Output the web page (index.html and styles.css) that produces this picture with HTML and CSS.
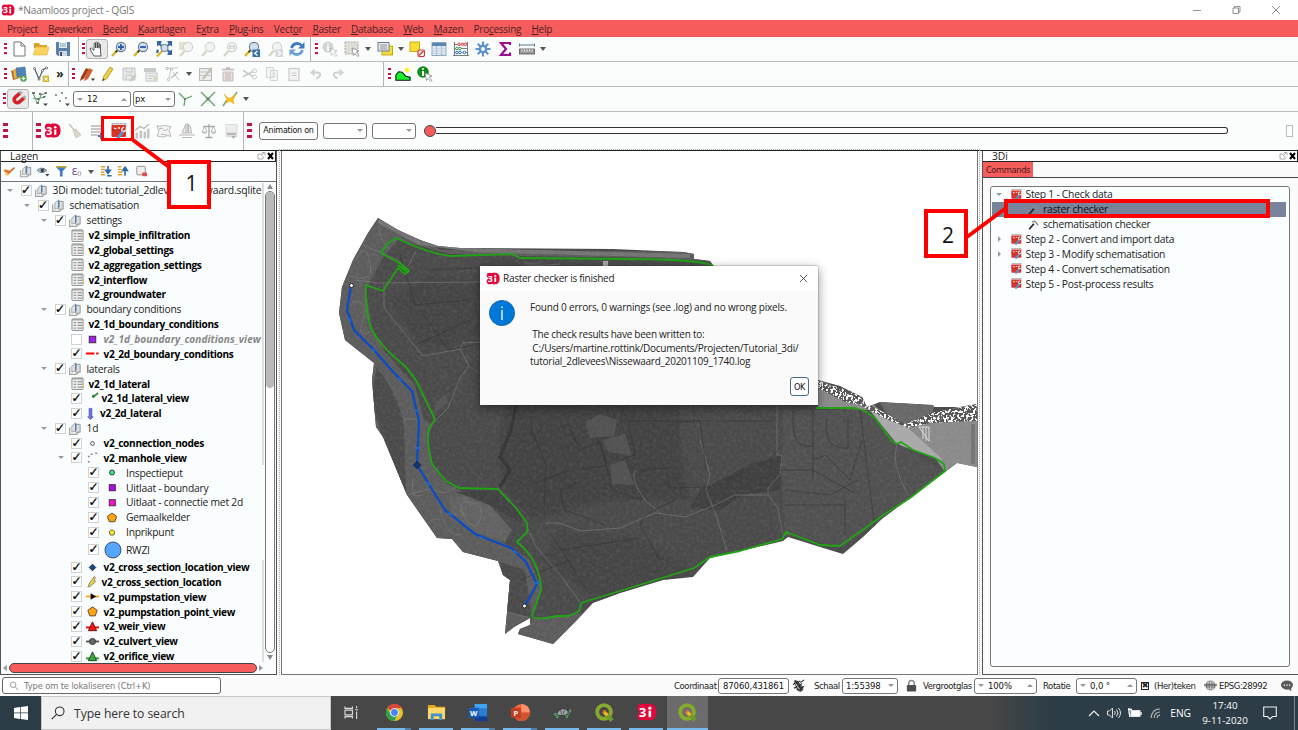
FILE: index.html
```html
<!DOCTYPE html>
<html lang="nl">
<head>
<meta charset="utf-8">
<title>*Naamloos project - QGIS</title>
<link rel="stylesheet" href="styles.css">
</head>
<body>
<svg class="defs" width="0" height="0">
<defs>
<symbol id="logo" viewBox="0 0 16 14"><rect x="3" y="0.5" width="12.5" height="13" rx="5" fill="#e3083c"/><circle cx="4" cy="3.7" r="3.2" fill="#e3083c"/><circle cx="4" cy="10.3" r="3.2" fill="#e3083c"/><text x="2.1" y="11" class="lg">3</text><rect x="9.6" y="6" width="2" height="5" fill="#fff"/><circle cx="10.6" cy="4" r="1.2" fill="#fff"/></symbol>
<symbol id="new" viewBox="0 0 16 16"><path d="M3 1h7l4 4v10H3z" fill="#fff" stroke="#777"/><path d="M10 1v4h4" fill="none" stroke="#777"/></symbol>
<symbol id="open" viewBox="0 0 16 16"><path d="M1 2h5l1 2h7v3H1z" fill="#d9a32b"/><path d="M0.5 14L2.5 6H16l-2 8z" fill="#fbd25d" stroke="#e3b13a" stroke-width=".6"/></symbol>
<symbol id="save" viewBox="0 0 16 16"><path d="M1 1h14v14H3l-2-2z" fill="#5b7fa6"/><rect x="4" y="1" width="8" height="6" fill="#e6eef5"/><path d="M5 3h6M5 5h6" stroke="#8aa"/><rect x="4" y="10" width="8" height="5" fill="#cfd8e2"/><rect x="5" y="11" width="2" height="4" fill="#456"/></symbol>
<symbol id="hand" viewBox="0 0 16 16"><path d="M5 15L2 10 1 7.500l1.500-.4L5 9.500V2.500q.8-1 1.600 0V7 1.600q.8-1 1.700 0V7 2q.9-1 1.700 0v5.300V3.600q.8-.8 1.500 0V11L12 15z" fill="#fff" stroke="#333" stroke-width=".8"/></symbol>
<symbol id="glass" viewBox="0 0 16 16"><path d="M1 15l5-5.400" stroke="#d9b52c" stroke-width="2.400"/><path d="M4.600 11.200L7 8.800" stroke="#222" stroke-width="1.600"/><circle cx="10" cy="6" r="4.600" fill="#cfe0f0" stroke="#667788" stroke-width="1.100"/></symbol>
<symbol id="zin" viewBox="0 0 16 16"><use href="#glass"/><path d="M7 6h6M10 3v6" stroke="#2b5ca4" stroke-width="1.800"/></symbol>
<symbol id="zout" viewBox="0 0 16 16"><use href="#glass"/><path d="M7 6h6" stroke="#2b5ca4" stroke-width="1.800"/></symbol>
<symbol id="zfull" viewBox="0 0 16 16"><path d="M1 15.500l5-5.500" stroke="#d9b52c" stroke-width="2.200"/><circle cx="8.500" cy="7" r="3.600" fill="#cfe0f0" stroke="#667788"/><path d="M1 0h4.500v1.500L4.500 2.500 6 4 4.500 5.500 3 4 1 5.500zM16 0v5.500L14 4l-1.500 1.500L11 4l1.500-1.500-1-1V0zM16 14h-4.500v-1.500l1-1L11 10l1.500-1.500L14 10l2-1.500zM1 8l2 1.500L2 12H0z" fill="#34669e"/></symbol>
<symbol id="gglass" viewBox="0 0 16 16"><path d="M2 15l4.500-5" stroke="#d4d4c4" stroke-width="2.200"/><circle cx="10" cy="6" r="4.600" fill="#f2f3f2" stroke="#ced2d2" stroke-width="1.100"/></symbol>
<symbol id="gz1" viewBox="0 0 16 16"><rect x="1" y="1" width="9" height="8" fill="#e2e2cf"/><use href="#gglass"/></symbol>
<symbol id="gz3" viewBox="0 0 16 16"><use href="#gglass"/><path d="M8 4v4M12 4v4M10 4.500v.8M10 7v.8" stroke="#b9bcbc"/></symbol>
<symbol id="zlast" viewBox="0 0 16 16"><use href="#glass"/><rect x="8.500" y="8.500" width="7.500" height="7.500" fill="#386fa8"/><path d="M13.500 10l-2.800 2.300 2.800 2.300" fill="none" stroke="#fff" stroke-width="1.300"/></symbol>
<symbol id="znext" viewBox="0 0 16 16"><use href="#gglass"/><rect x="8.500" y="8.500" width="7.500" height="7.500" fill="#d3d8dc"/><path d="M11 10l2.800 2.300-2.800 2.300" fill="none" stroke="#fff" stroke-width="1.300"/></symbol>
<symbol id="refresh" viewBox="0 0 16 16"><path d="M2.500 7Q4 2.500 8.500 2.500q2.500 0 4 2" fill="none" stroke="#3f7cc0" stroke-width="2.800"/><path d="M15.500 1v6.500H9z" fill="#3f7cc0"/><path d="M13.500 9Q12 13.500 7.500 13.500q-2.500 0-4-2" fill="none" stroke="#6da0d6" stroke-width="2.800"/><path d="M.5 15V8.500H7z" fill="#6da0d6"/></symbol>
<symbol id="cur" viewBox="0 0 16 16"><path d="M8 7l7 3-2.800 1L15 14.500 13.700 15.500 11 12.500 9.500 14.500z" fill="#fff" stroke="#888" stroke-width=".8"/></symbol>
<symbol id="gident" viewBox="0 0 16 16"><circle cx="6" cy="6" r="5.500" fill="#d2d4d4"/><path d="M6 5v5M6 2.500v1.400" stroke="#fff" stroke-width="1.800"/><use href="#cur" opacity=".5"/></symbol>
<symbol id="gsel" viewBox="0 0 16 16"><rect x="1" y="1" width="13" height="12" fill="#deded4" stroke="#aaa" stroke-dasharray="2 1"/><use href="#cur"/></symbol>
<symbol id="form" viewBox="0 0 16 16"><rect x="5" y="5" width="10.500" height="9" fill="#f3dc3e" stroke="#c7a912"/><rect x="1" y="1.500" width="11" height="8.500" fill="#e8ecef" stroke="#707a84"/><path d="M3 4h7M3 6h7M3 8h7" stroke="#8a939b"/></symbol>
<symbol id="desel" viewBox="0 0 16 16"><rect x="1" y="1" width="9.500" height="9.500" fill="#f7de34" stroke="#d0a912"/><rect x="9" y="9" width="6.500" height="6.500" rx="1.500" fill="#fff" stroke="#d93636" stroke-width="1.200"/><path d="M10 14.500l4.500-4.500" stroke="#d93636" stroke-width="1.400"/></symbol>
<symbol id="table" viewBox="0 0 16 16"><rect x="1" y="1.500" width="14" height="13" fill="#dfe8f0" stroke="#8aa6c2"/><path d="M1 3.500h14" stroke="#5c87b5" stroke-width="3"/><path d="M5.500 5v9M10.500 5v9" stroke="#98afc6" stroke-width=".8"/><path d="M1 7.500h14M1 10h14M1 12.500h14" stroke="#bccada" stroke-width=".6"/></symbol>
<symbol id="abacus" viewBox="0 0 16 16"><path d="M1.500 1v14M14.500 1v14M0 14.500h16M1 3.500h14M1 7.500h14M1 11.500h14" stroke="#66717c" stroke-width=".9"/><g fill="#fff" stroke-width="1"><g stroke="#d33"><circle cx="6" cy="3.300" r="1.300"/><circle cx="9.500" cy="3.300" r="1.300"/><circle cx="12.500" cy="3.300" r="1.300"/></g><g stroke="#3a9c46"><circle cx="4" cy="7.500" r="1.300"/><circle cx="7" cy="7.500" r="1.300"/></g><g stroke="#2f6fb5"><circle cx="4" cy="11.500" r="1.300"/><circle cx="7" cy="11.500" r="1.300"/><circle cx="11.500" cy="11.500" r="1.300"/></g></g></symbol>
<symbol id="gear" viewBox="0 0 16 16"><path d="M8 .5v15M.5 8h15M2.700 2.700l10.600 10.600M13.300 2.700L2.700 13.300" stroke="#5b92cf" stroke-width="2"/><circle cx="8" cy="8" r="4.400" fill="#5b92cf"/><circle cx="8" cy="8" r="1.900" fill="#fff"/></symbol>
<symbol id="sigma" viewBox="0 0 16 16"><path d="M13 4V2H4l5 6-5 6h9v-2.500" fill="none" stroke="#990b94" stroke-width="2.200"/></symbol>
<symbol id="ruler" viewBox="0 0 16 16"><path d="M.5 4h15" stroke="#5e7b96"/><path d="M.5 2.500v3M15.500 2.500v3" stroke="#5e7b96"/><rect x=".5" y="8" width="15" height="5" fill="#9a9a9a" stroke="#555" stroke-width=".8"/><path d="M3 8v2.500M5.500 8v2.500M8 8v3M10.500 8v2.500M13 8v2.500" stroke="#fff" stroke-width=".8"/></symbol>
<symbol id="layers" viewBox="0 0 16 16"><path d="M0 5l6-2 3 9-7 2z" fill="#b06c26"/><path d="M2 3.500l7-1 1 9-7 1z" fill="#e8b137"/><path d="M5 2l9-1 1 9-9 1z" fill="#4d82bd" stroke="#345f90" stroke-width=".5"/><circle cx="12.500" cy="12.500" r="3.300" fill="#57a555"/><path d="M10.700 12.500h3.600M12.500 10.700v3.600" stroke="#fff" stroke-width="1.200"/></symbol>
<symbol id="vnew" viewBox="0 0 16 16"><path d="M1.500 2.500L6 13l3.500-8.500 3-2.500" fill="none" stroke="#4d5d6c" stroke-width="1.200"/><g fill="#fff" stroke="#556" stroke-width=".8"><circle cx="1.500" cy="2.500" r="1.100"/><circle cx="6" cy="13" r="1.100"/><circle cx="9.500" cy="4.500" r="1.100"/><circle cx="13.500" cy="2" r="1.100"/></g><rect x="10" y="10" width="6" height="6" fill="#e4c02f" stroke="#a98a13" stroke-width=".5"/><path d="M11.500 11.500l3 3m0-3l-3 3" stroke="#fff"/></symbol>
<symbol id="pens" viewBox="0 0 16 16"><path d="M1 15l1-4 5-9 3 1.500-5 9z" fill="#9c3f1a"/><path d="M5 15l1-4 4-9 4 2-5 9z" fill="#d1622f"/><path d="M12 12.500h4L14 15z" fill="#333"/></symbol>
<symbol id="pen" viewBox="0 0 16 16"><path d="M2.500 15l1-4.500L10 1l3 2-6 9.500z" fill="#f0cf45" stroke="#a08a23" stroke-width=".7"/><path d="M2.500 15l.7-2.500 1.500 1z" fill="#333"/></symbol>
<symbol id="gsave" viewBox="0 0 16 16"><path d="M2 2h12v12H2z" fill="#e9ebeb" stroke="#c2c5c5"/><path d="M5 2v4h6V2M5 14V9h6v5" fill="none" stroke="#c2c5c5"/><path d="M9 15l6-6" stroke="#cacaba" stroke-width="2"/></symbol>
<symbol id="gtab" viewBox="0 0 16 16"><rect x="1" y="2" width="12" height="4" fill="#c8caca"/><rect x="3" y="7" width="11" height="8" fill="#efefef" stroke="#c2c5c5"/><path d="M5 10h7M5 12.500h4" stroke="#c2c5c5"/><circle cx="12.500" cy="12.500" r="2.500" fill="#d9d8c8"/></symbol>
<symbol id="gvert" viewBox="0 0 16 16"><path d="M1 2.500h6l6-1M6 3L3.500 14M8 6l6 8" fill="none" stroke="#c8cbcb" stroke-width="1.100"/><path d="M6 12l7-6" stroke="#b9bcbc" stroke-width="1.600"/><g fill="#fff" stroke="#bbb"><circle cx="2" cy="2.500" r="1.200"/><circle cx="6.500" cy="3" r="1.200"/><circle cx="3.500" cy="13.500" r="1.200"/></g></symbol>
<symbol id="gedit" viewBox="0 0 16 16"><rect x="1.500" y="2.500" width="12" height="12" fill="#ececec" stroke="#b8bbbb"/><path d="M2 6h11M2 9.500h11" stroke="#c2c5c5"/><path d="M5 13l8.500-11" stroke="#c2c3b0" stroke-width="2.200"/></symbol>
<symbol id="gtrash" viewBox="0 0 16 16"><path d="M2 3.500h12M6 2h4" stroke="#c4b6b6" stroke-width="1.500"/><path d="M3 6h10v9H3z" fill="#e9e2e2" stroke="#c4b8b8"/><path d="M6 7v7M8 7v7M10 7v7" stroke="#c4b8b8"/></symbol>
<symbol id="gcut" viewBox="0 0 16 16"><path d="M1 4.500l10 6M1 10.500l10-5" stroke="#c9cbcb" stroke-width="1.500"/><circle cx="12.500" cy="5" r="2" fill="none" stroke="#c9cbcb"/><circle cx="12.500" cy="11" r="2" fill="none" stroke="#c9cbcb"/></symbol>
<symbol id="gcopy" viewBox="0 0 16 16"><path d="M2.500 1.500h7v10h-7zM6.500 4.500h7v10h-7z" fill="#f4f4f4" stroke="#d2d4d4"/><path d="M8 8h4M8 10.500h4" stroke="#d9dbdb"/></symbol>
<symbol id="gpaste" viewBox="0 0 16 16"><rect x="3" y="2.500" width="10" height="12" fill="#f3f3f3" stroke="#ced0d0" stroke-width="1.300"/><path d="M6 2.500h4M5.500 7h5M5.500 9.500h5" stroke="#c6c8c8" stroke-width="1.200"/></symbol>
<symbol id="gundo" viewBox="0 0 16 16"><path d="M4 6h6q3.500 0 3.500 3T8.500 14" fill="none" stroke="#cfd1d1" stroke-width="2.600"/><path d="M0 6l6-5v10z" fill="#cfd1d1"/></symbol>
<symbol id="green" viewBox="0 0 18 16"><path d="M1 14V9l3-3.500 4 .5 4 4.500 5 1V15H1z" fill="#19f52c" stroke="#111" stroke-width="1.200"/><circle cx="13.500" cy="3.500" r="2" fill="#ffee1a"/><path d="M13.500 0v7M10 3.500h7M11 1l5 5M16 1l-5 5" stroke="#ffee1a" stroke-width=".8"/></symbol>
<symbol id="ident" viewBox="0 0 16 16"><circle cx="6" cy="6" r="5.800" fill="#118a1b"/><path d="M6 5v5M6 2.200v1.600" stroke="#fff" stroke-width="2"/><use href="#cur"/></symbol>
<symbol id="magnet" viewBox="0 0 16 16"><g transform="rotate(50 8 8)"><path d="M4.800 3v5.800a3.200 3.200 0 0 0 6.400 0V3" fill="none" stroke="#d3232a" stroke-width="3.600"/><path d="M3 1.800h3.600M9.400 1.800h3.600" stroke="#aaa" stroke-width="2.400"/></g></symbol>
<symbol id="vsnap" viewBox="0 0 16 16"><path d="M1 2l4.500 11L9 4l5-2M1 7l5 1 8-3" fill="none" stroke="#56a55d"/><path d="M0 2h3M7 3h2.500M12.500 2h2.500M5 8h2M11 6h2M4.500 12h2.500" stroke="#777" stroke-width="2.200"/><path d="M11 12.500h5L13.500 15z" fill="#444"/></symbol>
<symbol id="dots" viewBox="0 0 16 16"><path d="M1 4h2M7 2h2M5 10h2M11 7h2" stroke="#999" stroke-width="2"/><path d="M11 12.500h5L13.500 15z" fill="#444"/></symbol>
<symbol id="topo" viewBox="0 0 16 16"><path d="M6 15L7 8 1 2M7 8l7-3" fill="none" stroke="#5fa868" stroke-width="1.300"/><path d="M6 8h2" stroke="#777" stroke-width="2"/></symbol>
<symbol id="inter" viewBox="0 0 16 16"><path d="M1 1l14 14M15 1L1 15" stroke="#6bae72" stroke-width="1.500"/><path d="M6 8h4M8 6v4" stroke="#777"/></symbol>
<symbol id="trace" viewBox="0 0 16 16"><path d="M1 15L5 9M10 8l5-7" stroke="#6bae72" stroke-width="1.500"/><path d="M2 3l4 4h3l5-4-3 6 1 4-4-3-4 2 1-4z" fill="#f4c11d" stroke="#e0a916" stroke-width=".6"/></symbol>
<symbol id="broom" viewBox="0 0 16 16"><path d="M2 1l5 6" stroke="#c4c4bc" stroke-width="1.500"/><path d="M6 7l3-1 5 6-5 3z" fill="#d9d6c8" stroke="#bdbab0" stroke-width=".6"/></symbol>
<symbol id="gadd" viewBox="0 0 16 16"><path d="M2 3h11M2 6h11M2 9h11M2 12h7" stroke="#c6c6c6" stroke-width="1.800"/><path d="M9 13h6M12 10v6" stroke="#3583c4" stroke-width="2"/></symbol>
<symbol id="tool" viewBox="0 0 16 16"><path d="M1 2V.8h14V2" fill="none" stroke="#999"/><rect x=".5" y="2" width="14.500" height="12" rx="1" fill="#d8342b"/><path d="M.5 7h14" stroke="#b3241e" stroke-width=".8"/><path d="M3 5l2.500 1M7 5h2" stroke="#fff" stroke-width="1.300"/><path d="M6.500 15.500l5.500-7" stroke="#4a9ad8" stroke-width="2.800"/><path d="M11 8.500V5.500l2-1.500M12 8.800l3-1.300.5-2.500" fill="none" stroke="#e4e8ea" stroke-width="1.500"/></symbol>
<symbol id="chart" viewBox="0 0 16 16"><path d="M2 15v-5h1.500v5zM6 15V8h1.500v7zM10 15V9h1.500v6zM13.500 15V6H15v9z" fill="#c4c4c4" stroke="#c4c4c4"/><path d="M1 7.500l5-4 4 2 5-4.500" fill="none" stroke="#b5b5b5" stroke-width="1.200"/></symbol>
<symbol id="gmap" viewBox="0 0 16 16"><path d="M1 2.500l3 1 3-1 8 1-2 4 2 6-3-1-5 1.500-6-1 2-4z" fill="#f4f4f4" stroke="#bbb"/><path d="M3 6l3-1 2 3 4-2M5 11l6 1" fill="none" stroke="#bbb"/></symbol>
<symbol id="ship" viewBox="0 0 16 16"><path d="M7 1L3 10h4zM9.500 1l2 3 1 6h-3z" fill="#eee" stroke="#b8b8b8"/><path d="M8.200 0v11" stroke="#b8b8b8"/><path d="M0 12h16M3 14.500h10" fill="none" stroke="#b8b8b8" stroke-width="1.200"/></symbol>
<symbol id="scale" viewBox="0 0 16 16"><path d="M8 1v13M4.500 14.500h7M2 3.500h12" stroke="#aaa" stroke-width="1.300"/><path d="M3.500 3.500L1 9h5zM12.500 3.500L10 9h5z" fill="none" stroke="#aaa" stroke-width=".8"/><path d="M1 9.500q2.500 2.500 5 0zM10 9.500q2.500 2.500 5 0z" fill="#aaa"/></symbol>
<symbol id="gdoc" viewBox="0 0 16 16"><path d="M3 1.500h11v12H3z" fill="#ececec" stroke="#dadada"/><path d="M4 11h9" stroke="#b6b6b6" stroke-width="2.500"/><path d="M8.500 13h4l-2 3z" fill="#aaa"/></symbol>
<symbol id="grp" viewBox="0 0 14 14"><path d="M.7 6v7.300H8l2-2" fill="none" stroke="#a2a2a2" stroke-width="1.300"/><path d="M3 4.500l4-3.500v8.500L3 11z" fill="#e2e2e2" stroke="#8f8f8f" stroke-width=".8"/><path d="M7 2.500h5V11H7z" fill="#dedede" stroke="#858585" stroke-width=".9"/><path d="M7.300 1.500v7.500" stroke="#4b7fb5" stroke-width="1.600"/></symbol>
<symbol id="tbl" viewBox="0 0 14 14"><rect x="1" y="1" width="12" height="12.500" rx="1" fill="#ededed" stroke="#8b8b8b"/><path d="M1 2h12" stroke="#8b8b8b"/><path d="M3 5h2.500M7 5h5M3 8h2.500M7 8h5M3 11h2.500M7 11h5" stroke="#999" stroke-width="1.400"/></symbol>
<symbol id="brush" viewBox="0 0 14 14"><path d="M1 5l5 6 3-3-3-3z" fill="#f2a93a"/><path d="M1.500 6l5 2.500L13 3" fill="none" stroke="#d4682c" stroke-width="2"/><path d="M2 9.500l4 2" stroke="#f2c14a" stroke-width="1.800"/></symbol>
<symbol id="eye" viewBox="0 0 14 14"><path d="M0 6q5-5 11 0-5 5-11 0z" fill="#c4cbd2" stroke="#5b6b7b"/><circle cx="6" cy="6" r="2" fill="#345"/><path d="M9 10h5l-2.500 3z" fill="#444"/></symbol>
<symbol id="funnel" viewBox="0 0 14 14"><path d="M1 2h12L8.500 7v6h-3V7z" fill="#3e7dbf"/><path d="M1 2h12" stroke="#d5a72b" stroke-width="1.600"/></symbol>
<symbol id="expand" viewBox="0 0 14 14"><path d="M1 2h5M1 5h4M1 8h4M1 11h5" stroke="#dfa338" stroke-width="1.700"/><path d="M9 1v6M6.500 6L9 9.500 11.500 6z" stroke="#2c67a8" stroke-width="1.800" fill="#2c67a8"/><path d="M8 12h5" stroke="#2c67a8" stroke-width="1.600"/></symbol>
<symbol id="collapse" viewBox="0 0 14 14"><path d="M1 2h4M1 5h4M1 8h5M1 11h5" stroke="#dfa338" stroke-width="1.700"/><path d="M9 12V6M6.500 6L9 2.500 11.500 6z" stroke="#2c67a8" stroke-width="1.800" fill="#2c67a8"/></symbol>
<symbol id="remove" viewBox="0 0 14 14"><rect x="2" y="1.500" width="9.500" height="9.500" rx="1" fill="#eee" stroke="#888"/><rect x="8" y="8.500" width="5.500" height="4" rx="1" fill="#e34c4c"/></symbol>
<symbol id="hammer" viewBox="0 0 14 14"><path d="M1.500 13l6-7" stroke="#222" stroke-width="2.200"/><path d="M5 3.500L8.500 3l4.500 5" fill="none" stroke="#8d8d8d" stroke-width="1.800"/></symbol>
<symbol id="qgis" viewBox="0 0 20 20"><circle cx="9.500" cy="9.500" r="7.200" fill="none" stroke="#86ab2c" stroke-width="4"/><path d="M11 11l7 7.500" stroke="#6d9a28" stroke-width="4.500"/><path d="M9 9l4 4" stroke="#f0b12b" stroke-width="3.500"/><path d="M8 7.500l4 .5-3 3z" fill="#ed6c26"/></symbol>
</defs>
</svg>

<header class="title"><svg class="i16"><use href="#logo"/></svg><span class="t-name">*Naamloos project - QGIS</span>
<svg class="wctl" viewBox="0 0 100 20"><path d="M7 10.500h8M47 8h5.500v5.500H47zM48.500 8V6.500H54V12h-1.500M86 6l8 8M94 6l-8 8" fill="none" stroke="#777" stroke-width=".8"/></svg></header>
<nav class="menu"><span>Pro<u>j</u>ect</span><span><u>B</u>ewerken</span><span><u>B</u>eeld</span><span><u>K</u>aartlagen</span><span>E<u>x</u>tra</span><span><u>P</u>lug-ins</span><span>Vect<u>o</u>r</span><span><u>R</u>aster</span><span><u>D</u>atabase</span><span><u>W</u>eb</span><span><u>M</u>azen</span><span>Pro<u>c</u>essing</span><span><u>H</u>elp</span></nav>

<div class="bar">
<div class="grp w79"><i class="h h8"></i><b><svg><use href="#new"/></svg></b><b><svg><use href="#open"/></svg></b><b><svg><use href="#save"/></svg></b></div>
<div class="grp w232"><i class="h h7"></i><b class="on"><svg><use href="#hand"/></svg></b><b><svg><use href="#zin"/></svg></b><b><svg><use href="#zout"/></svg></b><b><svg><use href="#zfull"/></svg></b><b><svg><use href="#gz1"/></svg></b><b><svg><use href="#gglass"/></svg></b><b><svg><use href="#gz3"/></svg></b><b><svg><use href="#zlast"/></svg></b><b><svg><use href="#znext"/></svg></b><b><svg><use href="#refresh"/></svg></b></div>
<div class="grp"><i class="h h8"></i><b><svg><use href="#gident"/></svg></b><b><svg><use href="#gsel"/></svg></b><i class="dd"></i><b><svg><use href="#form"/></svg></b><i class="dd"></i><b><svg><use href="#desel"/></svg></b><b><svg><use href="#table"/></svg></b><b><svg><use href="#abacus"/></svg></b><b><svg><use href="#gear"/></svg></b><b><svg><use href="#sigma"/></svg></b><b><svg><use href="#ruler"/></svg></b><i class="dd"></i></div>
</div>
<div class="bar">
<div class="grp w69"><i class="h h8"></i><b><svg><use href="#layers"/></svg></b><b><svg><use href="#vnew"/></svg></b><span class="more">»</span></div>
<div class="grp w315"><i class="h h7"></i><b><svg><use href="#pens"/></svg></b><b class="c20"><svg><use href="#pen"/></svg></b><b><svg><use href="#gsave"/></svg></b><b><svg><use href="#gtab"/></svg></b><b><svg><use href="#gvert"/></svg></b><i class="dd"></i><b><svg><use href="#gedit"/></svg></b><b><svg><use href="#gtrash"/></svg></b><b><svg><use href="#gcut"/></svg></b><b><svg><use href="#gcopy"/></svg></b><b><svg><use href="#gpaste"/></svg></b><b><svg class="sm"><use href="#gundo"/></svg></b><b><svg class="sm flip"><use href="#gundo"/></svg></b></div>
<div class="grp"><i class="h h8"></i><b><svg><use href="#green"/></svg></b><b><svg><use href="#ident"/></svg></b></div>
</div>
<div class="bar">
<div class="grp"><i class="h h7"></i><b class="on"><svg><use href="#magnet"/></svg></b><b><svg><use href="#vsnap"/></svg></b><b><svg><use href="#dots"/></svg></b><div class="field f58"><i class="dn"></i><span>12</span><i class="up"></i></div><div class="field f41"><span>px</span><i class="dn"></i></div><b><svg><use href="#topo"/></svg></b><b><svg><use href="#inter"/></svg></b><b><svg><use href="#trace"/></svg></b><i class="dd"></i></div>
</div>
<div class="bar tall">
<div class="grp w33"><i class="h h8 big"></i></div>
<div class="grp w211"><i class="h h8 big"></i><b><svg class="lgo"><use href="#logo"/></svg></b><b><svg><use href="#broom"/></svg></b><b><svg><use href="#gadd"/></svg></b><b><svg><use href="#tool"/></svg></b><b><svg><use href="#chart"/></svg></b><b><svg><use href="#gmap"/></svg></b><b><svg><use href="#ship"/></svg></b><b><svg><use href="#scale"/></svg></b><b><svg><use href="#gdoc"/></svg></b></div>
<div class="grp fill"><i class="h h8 big"></i><button class="anim">Animation on</button><div class="field f44"><i class="dn"></i></div><div class="field f44"><i class="dn"></i></div><div class="slider"><i class="knob"></i><i class="track"></i></div><i class="stub"></i></div>
</div>

<main class="work">
<section class="dock left">
<div class="dtitle"><span>Lagen</span><svg viewBox="0 0 18 10"><path d="M1 3h4M1 3v5h5V5M4 5l3-3M5 1.500h3v3" fill="none" stroke="#999" stroke-width=".8"/><path d="M11 2l5 6M16 2l-5 6" stroke="#000" stroke-width="2"/></svg></div>
<div class="ltools"><svg><use href="#brush"/></svg><svg><use href="#grp"/></svg><svg><use href="#eye"/></svg><svg><use href="#funnel"/></svg><span>ε<small>()</small></span><i class="dd"></i><svg><use href="#expand"/></svg><svg><use href="#collapse"/></svg><svg><use href="#remove"/></svg></div>
<div class="lbody">
<div class="tree">
<div class="r l0"><i class="ar"></i><i class="cb">✓</i><svg><use href="#grp"/></svg><span class="root"><span>3Di model: tutorial_2dleve</span><span>waard.sqlite</span></span></div>
<div class="r l1"><i class="ar"></i><i class="cb">✓</i><svg><use href="#grp"/></svg><span>schematisation</span></div>
<div class="r l2"><i class="ar"></i><i class="cb">✓</i><svg><use href="#grp"/></svg><span>settings</span></div>
<div class="r lt"><svg><use href="#tbl"/></svg><strong>v2_simple_infiltration</strong></div>
<div class="r lt"><svg><use href="#tbl"/></svg><strong>v2_global_settings</strong></div>
<div class="r lt"><svg><use href="#tbl"/></svg><strong>v2_aggregation_settings</strong></div>
<div class="r lt"><svg><use href="#tbl"/></svg><strong>v2_interflow</strong></div>
<div class="r lt"><svg><use href="#tbl"/></svg><strong>v2_groundwater</strong></div>
<div class="r l2"><i class="ar"></i><i class="cb">✓</i><svg><use href="#grp"/></svg><span>boundary conditions</span></div>
<div class="r lt"><svg><use href="#tbl"/></svg><strong>v2_1d_boundary_conditions</strong></div>
<div class="r l3"><i class="ar n"></i><i class="cb"></i><svg viewBox="0 0 14 14"><rect x="3.500" y="3.500" width="7" height="7" fill="#a01ff0" stroke="#423"/></svg><em>v2_1d_boundary_conditions_view</em></div>
<div class="r l3"><i class="ar n"></i><i class="cb">✓</i><svg viewBox="0 0 14 14"><path d="M0 7h9M11 7h2.500" stroke="#f00" stroke-width="2"/></svg><strong>v2_2d_boundary_conditions</strong></div>
<div class="r l2"><i class="ar"></i><i class="cb">✓</i><svg><use href="#grp"/></svg><span>laterals</span></div>
<div class="r lt"><svg><use href="#tbl"/></svg><strong>v2_1d_lateral</strong></div>
<div class="r l3 m1"><i class="ar n"></i><i class="cb">✓</i><svg viewBox="0 0 14 14"><path d="M7 6l6-5" stroke="#3b9140" stroke-width="2"/><circle cx="8" cy="4.500" r="1.500" fill="#2e7c33"/></svg><strong>v2_1d_lateral_view</strong></div>
<div class="r l3 m3"><i class="ar n"></i><i class="cb">✓</i><svg viewBox="0 0 14 14"><path d="M5.500 1.500h3v9H10L7 13.500 4 10.500h1.500z" fill="#6d70e8" stroke="#4a4cae" stroke-width=".7"/></svg><strong>v2_2d_lateral</strong></div>
<div class="r l2"><i class="ar"></i><i class="cb">✓</i><svg><use href="#grp"/></svg><span>1d</span></div>
<div class="r l3"><i class="ar n"></i><i class="cb">✓</i><svg viewBox="0 0 14 14"><circle cx="7" cy="7" r="2" fill="#fff" stroke="#444"/></svg><strong>v2_connection_nodes</strong></div>
<div class="r l3"><i class="ar"></i><i class="cb">✓</i><svg viewBox="0 0 14 14"><path d="M2 6h2M5 3.500h2M10 2.500h2M2 11.500h2" stroke="#888" stroke-width="1.600"/></svg><strong>v2_manhole_view</strong></div>
<div class="r l4"><i class="cb">✓</i><svg viewBox="0 0 14 14"><circle cx="6.500" cy="7" r="2.700" fill="#3de57c" stroke="#234"/></svg><span>Inspectieput</span></div>
<div class="r l4"><i class="cb">✓</i><svg viewBox="0 0 14 14"><rect x="3.500" y="4" width="6.500" height="6.500" fill="#a80df5" stroke="#423"/></svg><span>Uitlaat - boundary</span></div>
<div class="r l4"><i class="cb">✓</i><svg viewBox="0 0 14 14"><rect x="3.500" y="4" width="6.500" height="6.500" fill="#f90fd2" stroke="#423"/></svg><span>Uitlaat - connectie met 2d</span></div>
<div class="r l4"><i class="cb">✓</i><svg viewBox="0 0 14 14"><path d="M6.500 2.200l5 3.600-2 5.700h-6l-2-5.700z" fill="#ffa50f" stroke="#543"/></svg><span>Gemaalkelder</span></div>
<div class="r l4"><i class="cb">✓</i><svg viewBox="0 0 14 14"><path d="M6.500 4l3 2.200-1.200 3.500H4.700L3.500 6.200z" fill="#fff52a" stroke="#553"/></svg><span>Inprikpunt</span></div>
<div class="r l4 hi"><i class="cb">✓</i><svg viewBox="0 0 18 18"><circle cx="9" cy="9" r="8" fill="#55a6fc" stroke="#345" stroke-width=".9"/></svg><span>RWZI</span></div>
<div class="r l3"><i class="ar n"></i><i class="cb">✓</i><svg viewBox="0 0 14 14"><path d="M7 3.500L10.500 7 7 10.500 3.500 7z" fill="#1a4798" stroke="#123"/></svg><strong>v2_cross_section_location_view</strong></div>
<div class="r l3 m1"><i class="ar n"></i><i class="cb">✓</i><svg viewBox="0 0 14 14"><path d="M2 13l2-5L9 1.500l1 .8-1 4 1.500.5L5 12z" fill="#e4cc50" stroke="#665" stroke-width=".7"/></svg><strong>v2_cross_section_location</strong></div>
<div class="r l3"><i class="ar n"></i><i class="cb">✓</i><svg viewBox="0 0 14 14"><path d="M0 7h14" stroke="#faa41a" stroke-width="2"/><path d="M5 3.500L11 7l-6 3.500z" fill="#111"/></svg><strong>v2_pumpstation_view</strong></div>
<div class="r l3"><i class="ar n"></i><i class="cb">✓</i><svg viewBox="0 0 14 14"><path d="M7 2l5 3.700-2 6H4l-2-6z" fill="#ffa50f" stroke="#543"/></svg><strong>v2_pumpstation_point_view</strong></div>
<div class="r l3"><i class="ar n"></i><i class="cb">✓</i><svg viewBox="0 0 14 14"><path d="M0 8h14" stroke="#e00" stroke-width="2"/><path d="M7 2l4.500 9.500h-9z" fill="#f11616" stroke="#611"/></svg><strong>v2_weir_view</strong></div>
<div class="r l3"><i class="ar n"></i><i class="cb">✓</i><svg viewBox="0 0 14 14"><path d="M0 7h14" stroke="#555" stroke-width="2"/><circle cx="7" cy="7" r="3.300" fill="#666" stroke="#333"/></svg><strong>v2_culvert_view</strong></div>
<div class="r l3"><i class="ar n"></i><i class="cb">✓</i><svg viewBox="0 0 14 14"><path d="M0 9h14" stroke="#393" stroke-width="2"/><path d="M7 2l4.500 9.500h-9z" fill="#3aa83a" stroke="#142"/></svg><strong>v2_orifice_view</strong></div>
</div>
<div class="vs"><i class="tri u"></i><div class="vtrack"><i></i></div><i class="tri"></i></div>
</div>
<div class="hs"><i class="tri l"></i><i class="hbar"></i><i class="tri rr"></i></div>
</section>

<section class="canvas">
<svg class="map" viewBox="282 151 695 522">
<defs>
<clipPath id="land"><path d="M378 218L398 230 420 240 438 246 460 248 613 249 683 252 694 254 694 259 710 261 713 265 818 380 840 386 862 397 867 407 880 402 933 405 934 407 960 407 977 404V467L957 463 945 472 910 498 883 518 863 537 843 554 820 547 788 537 783 541 740 551 710 558 693 577 663 580 620 593 593 603 575 622 553 644 518 634 520 629 530 625V618L514 627 505 634 510 580 503 575 498 561 463 552 452 539 437 538 407 495 383 437 376 427 372 380 374 363 345 340 339 313 342 287 353 260 368 233Z"/></clipPath>
<filter id="grain" x="0" y="0" width="100%" height="100%"><feTurbulence type="fractalNoise" baseFrequency=".3" numOctaves="3" seed="6"/><feColorMatrix values="0 0 0 0 .7  0 0 0 0 .7  0 0 0 0 .7  1.6 0 0 0 -.6"/></filter>
<filter id="specks" x="0" y="0" width="100%" height="100%"><feTurbulence type="fractalNoise" baseFrequency=".45" numOctaves="2" seed="3"/><feColorMatrix values="0 0 0 0 1  0 0 0 0 1  0 0 0 0 1  14 0 0 0 -7" result="n"/><feComposite in="n" in2="SourceGraphic" operator="in"/></filter>
<filter id="soft"><feGaussianBlur stdDeviation="2"/></filter>
</defs>
<g clip-path="url(#land)">
<rect x="330" y="200" width="650" height="450" fill="#4a4a4a"/>
<path d="M335 215L378 215 440 250 720 252V262L650 258 520 256 450 254 398 240 384 256 366 290 372 330 385 352 415 385 424 420 433 425 428 438 432 465 446 483 470 495 500 540 530 560 542 590 532 618 590 612 553 650 490 650 330 400Z" fill="#5c5c5c"/>
<path d="M377 368Q402 400 404 430L406 494 383 437 370 400ZM500 562L525 570 532 618 508 612Z" fill="#4a4a4a"/>
<path d="M378 221L420 243 480 250.500 690 256" fill="none" stroke="#747474" stroke-width="4"/>
<path d="M450 500L465 496 490 505 512 530 505 542 478 533 452 520Z" fill="#626262"/>
<path d="M455 492L496 490 524 518 520 522 492 506 465 495Z" fill="#414141"/>
<g filter="url(#soft)"><path d="M505 405H680V440L690 500 610 500 530 520 505 490 498 460Z" fill="#424242"/>
<path d="M430 275L480 280 480 340 425 350 390 300ZM540 560L600 600 690 570 640 540 560 530Z" fill="#444"/></g>
<path d="M740 470L782 455 780 490 745 494 720 510 690 508 700 490Z" fill="#3f3f3f"/>
<path d="M818 380L865 398 880 410 905 425 977 400V468L957 463 945 472 935 458 897 444 870 410 818 408Z" fill="#8b8b8b"/>
<path d="M868 408L880 413 905 425 943 460 935 458 897 444Z" fill="#a9a9a9"/>
<path d="M880 402L934 405 932 420 905 425 885 412Z" fill="#686868"/>
<path d="M783 410H866L892 440 945 471 910 498 843 548 784 535 782 470Z" fill="#505050"/>
<rect x="330" y="200" width="650" height="450" filter="url(#grain)" opacity=".12"/>
<g fill="none" stroke="#838383" stroke-width=".8" opacity=".7">
<path d="M363 245L382 253 398 260 409 270M355 280L378 283 480 282M384 284V308L410 340 423 356 460 349 463 343 480 342M416 251L408 266M460 349L469 366 460 378 448 408 436 420M388 248L382 240 378 226M356 260Q365 240 370 262T350 276M352 302Q370 300 363 320T370 332M404 419H420M407 495L430 489 445 493 460 485M528 529L535 545 560 575 580 602M545 523L560 523 580 531 620 528 655 513 685 517 715 505 735 495 768 495 768 488 780 475 782 455 777 455 777 405M768 495L778 508 783 535M700 440L710 475 706 490 716 515 727 551M635 470Q630 480 645 500L660 513M897 444Q890 465 909 496M507 612L530 618"/>
<path d="M440 510Q448 540 462 534M465 516Q455 500 470 502T480 520T460 510M413 480Q410 500 422 495M425 530Q430 515 440 520M524 262L535 266 560 264"/></g>
<g fill="none" stroke="#2f2f2f" stroke-width=".7" opacity=".65">
<path d="M620 405L628 420 635 455 622 459 635 470M676 422H694V405M620 421H755L777 421M700 420L706 470M640 470L667 468 669 488 708 487M725 480L740 475 745 466 770 460 780 447M560 428L568 424 580 450 600 442 606 465 580 470M583 480L560 490 565 510 605 525M590 420L604 455 612 490 642 500M530 425L546 465 544 510M660 560L640 525 645 515 675 500M560 550L640 538M530 485L570 470M793 410V425Q795 450 813 446M827 418Q822 450 848 448V416M813 410V480M780 470H813L830 480 855 493M785 490L830 495 858 480M785 505H845M845 500V535M860 410L875 530M814 460L825 455 850 480 862 440"/>
<path d="M400 255L415 305 470 300M425 270L480 268M420 310L448 350 475 345M415 345L470 320M520 580L570 560M552 535L590 595"/></g>
<path d="M516 405L511 430 500 457 510 470 500 487" fill="none" stroke="#383838" stroke-width="3"/>
<g fill="#646464" opacity=".5"><path d="M436 402L446 394 448 402 434 414ZM585 422L600 414 617 420 614 436 590 438ZM604 440L625 434 632 456 608 452ZM610 465L625 460 634 485 612 484ZM524 262H540V266H524Z"/></g>
<path d="M603 261h5v5h-5z" fill="#aaa"/>
<path d="M818 381L860 394 868 404 905 424 935 412 977 404V421L930 423 908 428 884 418 860 405 845 402 818 388Z" fill="#575757"/>
<path d="M818 381L860 394 868 404 905 424 935 412 977 404V421L930 423 908 428 884 418 860 405 845 402 818 388Z" filter="url(#specks)"/>
<path d="M919 427h10v14zM923 427v12M926 427v14" fill="none" stroke="#ddd"/>
<path d="M971 424h4v40h-4z" fill="#777"/>
</g>
<g fill="none" stroke="#20a414" stroke-width="1.800" stroke-linejoin="round">
<path d="M713 266Q700 259 622 259L520 258 512 254 450 256Q430 254 396 238L388 243 381 253 401 264 409 271 405 274 398 268 383 291 366 285Q365 320 375 335T398 360Q415 374 421 391L435 419 429 429Q426 440 432 464L446 481 459 488 498 489 516 508 527 523V532L517 542Q540 560 541 590L532 616Q536 621 557 616L569 616 579 611 581 603 620 591 694 568 710 557 740 551 782 539 786 532 820 545 840 546 885 514 910 498 945 471 944 464 935 458 913 450 901 442 897 444 892 441 875 418 865 411 855 408H816"/><path d="M398 265l9 7-3-4-5-2"/></g>
<path d="M351 285L347 310 354 330 374 350 395 374 412 391 419 421 417 465 445 510 475 534 511 548 526 562 537 584 525 606" fill="none" stroke="#0d4bc4" stroke-width="2.300"/>
<path d="M348 318l3 3M371 349l4 2M397 378l5 2M415 410l4 2M415 448h5M426 482l5 3M448 513l4 2M479 537l4 1M513 551l4 2M534 583h5" stroke="#2067d2" stroke-width="1.800"/>
<path d="M417 461.500l3.500 3.500-3.500 3.500-3.500-3.500z" fill="#14357d" stroke="#0b1c48"/>
<circle cx="351.500" cy="285.500" r="2" fill="#fff" stroke="#222"/><circle cx="524.500" cy="606" r="2" fill="#fff" stroke="#222"/>
</svg>
</section>

<section class="dock right">
<div class="dtitle"><span>3Di</span><svg viewBox="0 0 18 10"><path d="M1 3h4M1 3v5h5V5M4 5l3-3M5 1.500h3v3" fill="none" stroke="#999" stroke-width=".8"/><path d="M11 2l5 6M16 2l-5 6" stroke="#000" stroke-width="2"/></svg></div>
<div class="tabs"><span>Commands</span></div>
<div class="cmds">
<div class="c"><i class="ar"></i><svg><use href="#tool"/></svg><span>Step 1 - Check data</span></div>
<div class="c sub sel"><svg><use href="#hammer"/></svg><span>raster checker</span></div>
<div class="c sub"><svg><use href="#hammer"/></svg><span>schematisation checker</span></div>
<div class="c"><i class="ar side"></i><svg><use href="#tool"/></svg><span>Step 2 - Convert and import data</span></div>
<div class="c"><i class="ar side"></i><svg><use href="#tool"/></svg><span>Step 3 - Modify schematisation</span></div>
<div class="c"><i class="ar n"></i><svg><use href="#tool"/></svg><span>Step 4 - Convert schematisation</span></div>
<div class="c"><i class="ar n"></i><svg><use href="#tool"/></svg><span>Step 5 - Post-process results</span></div>
</div>
</section>
</main>

<footer class="status">
<div class="locate"><svg viewBox="0 0 12 12"><circle cx="5" cy="4.500" r="3.300" fill="none" stroke="#888"/><path d="M7.500 7l3.500 4" stroke="#888"/></svg><span>Type om te lokaliseren (Ctrl+K)</span></div>
<span class="lab">Coordinaat</span><div class="field f71"><span>87060,431861</span></div>
<svg class="s14" viewBox="0 0 14 14"><path d="M2 3q3-3 5 0l5 6q1 4-3 5-2 0-4-3z" fill="#555"/><path d="M1 6l8-4M2 10l9-5M5 12l8-4M9 4l4-3M3 1l7 11" stroke="#222" stroke-width="1.100"/><path d="M4 5l4 6" stroke="#eee"/></svg>
<span class="lab schaal">Schaal</span><div class="field f56"><span>1:55398</span><i class="dn"></i></div>
<svg class="s14 lock" viewBox="0 0 14 14"><path d="M4 7V4.500q0-3 3-3t3 3V7" fill="none" stroke="#888" stroke-width="1.600"/><rect x="2" y="6.500" width="10" height="7" rx="1" fill="#4d4d4d"/></svg>
<span class="lab verg">Vergrootglas</span><div class="field f62"><i class="dn"></i><span>100%</span><i class="up"></i></div>
<span class="lab rot">Rotatie</span><div class="field f60"><i class="dn"></i><span>0,0 °</span><i class="up"></i></div>
<i class="xbox">✖</i><span class="lab her">(Her)teken</span>
<svg class="s14 globe" viewBox="0 0 14 14"><circle cx="7" cy="7" r="5.500" fill="#777"/><path d="M1.500 7h11M7 1.500v11M3 4h8M3 10h8" stroke="#ddd" stroke-width=".7"/><ellipse cx="7" cy="7" rx="2.800" ry="5.500" fill="none" stroke="#ddd" stroke-width=".7"/><path d="M0 6.500h14" stroke="#666" stroke-width="1.600"/></svg>
<span class="lab epsg">EPSG:28992</span>
<svg class="s14 talk" viewBox="0 0 14 14"><ellipse cx="7" cy="6.500" rx="6.500" ry="5" fill="#5b5b5b"/><path d="M8 10l3.500 3.500V9z" fill="#5b5b5b"/><path d="M3.500 6.500h7" stroke="#fff" stroke-width="1.400" stroke-dasharray="1.400 1.400"/></svg>
</footer>

<div class="taskbar">
<div class="start"><svg viewBox="0 0 14 14"><path d="M0 2l6-.9v5.500H0zM6.700 1L14 0v6.600H6.700zM0 7.300h6v5.600L0 12zM6.700 7.300H14V14l-7.300-1z" fill="#fff"/></svg></div>
<div class="search"><svg viewBox="0 0 14 14"><circle cx="8.700" cy="5.300" r="4.300" fill="none" stroke="#333" stroke-width="1.100"/><path d="M5.600 8.400L.8 13.200" stroke="#333" stroke-width="1.200"/></svg><span>Type here to search</span></div>
<div class="apps">
<div class="app none"><svg class="tv" viewBox="0 0 16 14"><path d="M1 .5v2h8v-2M1 4.500h8v5H1zM1 13.500v-2h8v2M13.500 0v2.500M13.500 6v8M12 4h3" fill="none" stroke="#ddd" stroke-width="1.200"/></svg></div>
<div class="app two"><svg viewBox="0 0 20 20"><circle cx="10" cy="10" r="9" fill="#e7c02d"/><path d="M10 10L2.200 5.500A9 9 0 0 1 17.800 5.500H10z" fill="#d9453a"/><path d="M2.200 5.500A9 9 0 0 0 9.500 19L13.500 12 6 12z" fill="#2fa04f"/><circle cx="10" cy="10" r="4.600" fill="#fff"/><circle cx="10" cy="10" r="3.600" fill="#4285f4"/></svg></div>
<div class="app"><svg viewBox="0 0 20 20"><path d="M1 2h7l2 2h9v4H1z" fill="#e0a51b"/><path d="M1 5h18v12H1z" fill="#fbd867"/><path d="M4 18v-7h12v7h-3v-4H7v4z" fill="#3f93d3"/></svg></div>
<div class="app two"><svg viewBox="0 0 20 20"><path d="M6 1h13v18H6z" fill="#2b7cd3"/><path d="M6 1h13v4.500H6z" fill="#41a5ee"/><path d="M6 14h13v5H6z" fill="#103f91"/><rect y="5" width="10.500" height="10.500" rx="1" fill="#185abd"/><text x="1" y="13.200" class="ap">W</text></svg></div>
<div class="app two"><svg viewBox="0 0 20 20"><circle cx="11" cy="10" r="9" fill="#ed6c47"/><path d="M11 1a9 9 0 0 1 9 9h-9z" fill="#ff8f6b"/><path d="M20 10a9 9 0 0 1-18 0z" fill="#d35230"/><rect y="5" width="10.500" height="10.500" rx="1" fill="#c43e1c"/><text x="2.500" y="13.200" class="ap">P</text></svg></div>
<div class="app"><svg viewBox="0 0 20 20"><path d="M2 13q4-1 13 0l4-6M4 11l-3 1M6 13l-2 3M14 13l1 3" stroke="#4c9a5c" stroke-width="2" fill="none"/><path d="M4 12q2-6 7-6t5 5l-3 2H5z" fill="#a3a7ad" stroke="#333"/><path d="M8 7l1 5M12 7l-1 5" stroke="#555"/></svg></div>
<div class="app"><svg><use href="#qgis"/></svg></div>
<div class="app"><svg class="big3"><use href="#logo"/></svg></div>
<div class="app act"><svg><use href="#qgis"/></svg></div>
</div>
<div class="tray">
<svg viewBox="0 0 74 14"><path d="M1 10l5-5 5 5" fill="none" stroke="#eee" stroke-width="1.200"/><path d="M19.500 5h2l3-3v10l-3-3h-2zM26.500 5q1.500 2 0 4M28.500 3.500q3 3.500 0 7M30.500 2q4 5 0 10" fill="none" stroke="#ddd"/><rect x="43" y="4.500" width="9" height="6" fill="#fff" stroke="#ddd"/><path d="M53 6v3M40 3.500h4M41 2v4l1 5" stroke="#fff" stroke-width="1.300" fill="none"/><path d="M63 12q1-9 9-9M66 12q1-6 6-6M69 12q.5-3 3-3" fill="none" stroke="#bbb" stroke-width="1.100"/></svg>
<span>ENG</span><div class="clock"><span>17:40</span><span>9-11-2020</span></div>
<svg class="note" viewBox="0 0 14 14"><path d="M.7 1h12.600v9.500H9.500L7 13l-2.500-2.500H.7z" fill="none" stroke="#eee" stroke-width="1.100"/></svg><i class="edge"></i>
</div>
</div>

<div class="dialog">
<div class="dlgt"><svg class="dl"><use href="#logo"/></svg><span>Raster checker is finished</span><svg class="x" viewBox="0 0 10 10"><path d="M1 1l8 8M9 1L1 9" stroke="#333" stroke-width=".9"/></svg></div>
<div class="dlgb"><svg class="info" viewBox="0 0 26 26"><circle cx="13" cy="13" r="12.600" fill="#0078d7" stroke="#0a5ea5" stroke-width=".8"/><path d="M13 10v10M13 6.500v1.800" stroke="#fff" stroke-width="1.300"/></svg>
<p><span class="q1">Found 0 errors, 0 warnings (see .log) and no wrong pixels.</span><br><br><span class="q2"> The check results have been written to:</span><br><span class="q3"> C:/Users/martine.rottink/Documents/Projecten/Tutorial_3di/</span><br><span class="q4">tutorial_2dlevees\Nissewaard_20201109_1740.log</span></p></div>
<button class="ok">OK</button>
</div>

<svg class="lines" viewBox="0 0 1298 730"><path d="M133 140L169 167M967 237L1006 208" stroke="#f00" stroke-width="4"/></svg>
<div class="mark m-a"></div><div class="mark m-b"></div>
<div class="num n1">1</div><div class="num n2">2</div>
</body>
</html>
```
FILE: styles.css
```css
* { box-sizing: border-box; }
body { margin: 0; width: 1298px; height: 730px; overflow: hidden; position: relative; display: flex; flex-direction: column; background: #fbfbfb; font: 10.3px/15px "Open Sans", "Noto Sans", sans-serif; color: #222; }
.defs { position: absolute; }
svg { display: block; flex: none; }
i, em { font-style: normal; }
.lg { font: bold 10px "Open Sans", sans-serif; fill: #fff; }
.ap { font: bold 8px "Open Sans", sans-serif; fill: #fff; }

.title { height: 20px; flex: none; display: flex; align-items: center; background: #fff; color: #777; padding-left: 1px; }
.i16 { width: 14px; height: 12px; }
.t-name { margin-left: 3px; font-size: 10.200px; letter-spacing: -.25px; }
.wctl { width: 100px; height: 20px; margin-left: auto; margin-right: 12px; }

.menu { height: 17px; flex: none; background: #f75c5c; color: #4c2326; display: flex; gap: 10.200px; padding-left: 7px; line-height: 18px; font-size: 10px; letter-spacing: -.25px; }
.menu u { text-underline-offset: 1px; }

.bar { height: 25px; flex: none; display: flex; border-bottom: 1px solid #bcbcbc; background: #fafdfc; }
.bar.tall { height: 38px; border-bottom: 0; }
.bar.tall .grp { padding-bottom: 1px; }
.grp { display: flex; align-items: center; border-right: 1px solid #b4b4b4; height: 100%; flex: none; }
.grp:last-child { border: 0; }
.w79 { width: 79px; } .w232 { width: 232px; } .w69 { width: 69px; } .w315 { width: 315px; } .w33 { width: 33px; } .w211 { width: 211px; }
.grp.fill { flex: 1; }
.h { height: 12px; flex: none; background: repeating-linear-gradient(#c01346 0 2px, transparent 2px 4.500px) no-repeat 4px 0 / 3px 12px; }
.h8 { width: 8px; } .h7 { width: 7px; background-position: 3px 0; }
.h.big { height: 15px; background: repeating-linear-gradient(#c01346 0 3px, transparent 3px 6px) no-repeat 3px 0 / 5px 15px; }
.grp b { width: 22px; height: 20px; display: flex; align-items: center; justify-content: center; flex: none; }
.w232 b { width: 22.200px; }
.w211 b { width: 22.400px; }
.grp b svg { width: 16px; height: 16px; }
.grp b svg.sm { width: 12px; height: 12px; }
.grp b svg.lgo { width: 17px; height: 15px; }
.flip { transform: scaleX(-1); }
.grp b.c20 { width: 20px; }
.on { background: #e9e9e9; border: 1px solid #b5b5b5; border-radius: 3px; }
.dd { width: 10.500px; display: flex; justify-content: center; flex: none; }
.dd::before { content: ""; border: 3px solid transparent; border-top: 4px solid #555; border-bottom: 0; }
.more { width: 17px; text-align: center; font-size: 12px; font-weight: bold; color: #222; line-height: 20px; }
.field { height: 16px; border: 1px solid #777; border-radius: 3px; background: #fff; display: flex; align-items: center; gap: 4px; padding: 0 3px; font: 8.500px/14px "DejaVu Sans", sans-serif; letter-spacing: -.1px; color: #111; flex: none; }
.field i { border: 3px solid transparent; }
.field .dn { border-top: 3.500px solid #999; border-bottom: 0; }
.field .up { border-bottom: 3.500px solid #999; border-top: 0; }
.field i:last-child { margin-left: auto; }
.f58 { width: 58px; margin-right: 2px; } .f41 { width: 42px; padding-left: 1px; } .f44 { width: 44px; margin-left: 5px; }
.anim { width: 59px; height: 18px; margin: 0 0 0 7px; padding: 0; border: 1px solid #777; border-radius: 3px; background: #fdfdfd; font: 8px "DejaVu Sans", sans-serif; letter-spacing: -.25px; white-space: nowrap; color: #111; }
.slider { display: flex; align-items: center; width: 804px; margin-left: 8px; }
.knob { width: 12px; height: 12px; border: 1px solid #444; border-radius: 50%; background: #f75c5c; }
.track { flex: 1; height: 7px; border: 1px solid #333; border-left: 0; border-radius: 0 3px 3px 0; background: #fff; }
.stub { width: 7px; height: 12px; border: 1px solid #bbb; margin-left: auto; margin-right: 5px; }

.work { height: 525px; flex: none; display: flex; border-top: 1px solid #222; }
.dock { display: flex; flex-direction: column; }
.left { width: 277px; border: 1px solid #555; border-top: 0; background: #fafdfd; }
.dtitle { height: 11px; flex: none; display: flex; align-items: center; border: 1px solid #222; border-top: 0; border-left: 0; padding-left: 9px; background: #fff; line-height: 11px; letter-spacing: -.1px; }
.dtitle svg { width: 18px; height: 10px; margin-left: auto; }
.ltools { height: 20px; flex: none; display: flex; align-items: center; gap: 4.700px; padding-left: 2px; border-bottom: 1px solid #777; }
.ltools svg { width: 12.500px; height: 12.500px; }
.ltools span { width: 12px; color: #744a86; font-size: 12px; line-height: 10px; white-space: nowrap; }
.ltools small { font-size: 6px; }
.ltools .dd { width: 8px; margin-left: -1px; }
.lbody { height: 480px; flex: none; display: flex; }
.tree { width: 263px; flex: none; overflow: hidden; padding-top: 1px; letter-spacing: -.24px; }
.r { height: 14.860px; display: flex; align-items: center; white-space: nowrap; line-height: 14px; width: 263px; overflow: hidden; border-right: 2px solid #dfdfdf; flex: none; }
.r.l4 { border: 0; }
.r.hi { height: 20px; }
.r svg { width: 13px; height: 13px; margin: 0 4.500px 0 3px; }
.root { width: 209px; display: flex; justify-content: space-between; letter-spacing: -.15px; }
.ar { width: 10px; margin-right: 5.500px; display: flex; justify-content: center; flex: none; }
.ar::before { content: ""; border: 3px solid transparent; border-top: 3.500px solid #999; border-bottom: 0; }
.ar.side::before { border: 3px solid transparent; border-left: 3.500px solid #999; border-right: 0; }
.ar.n::before { display: none; }
.cb { width: 11px; height: 11px; margin-right: .5px; border: 1px solid #d2d2d2; background: #fff; font: bold 12px/9px "DejaVu Sans", sans-serif; letter-spacing: 0; color: #000; display: flex; justify-content: center; flex: none; -webkit-text-stroke: .3px #000; }
.l0 { padding-left: 4px; } .l1 { padding-left: 21px; } .l2 { padding-left: 38px; } .l3 { padding-left: 54.500px; } .lt { padding-left: 67px; } .l4 { padding-left: 87px; }
.r.l3 svg { margin-right: 5px; }
.r.l4 svg { margin: 0 7px 0 6.500px; }
.r.hi svg { width: 18px; height: 18px; margin: 0 4.500px 0 4px; }
.r.m1 svg { margin-right: 3px; } .r.m3 svg { margin-left: 1px; margin-right: 3.500px; }
.r strong, .r em { font-size: 10.100px; letter-spacing: -.31px; color: #000; }
.r em { font-weight: bold; font-style: italic; color: #888; letter-spacing: .06px; }
.vs { width: 12px; display: flex; flex-direction: column; align-items: center; }
.vtrack { flex: 1; width: 10px; border: 1px solid #777; border-radius: 5px; background: #fff; }
.vtrack i { display: block; height: 196px; background: #b9b9b9; border-radius: 4px; }
.tri { border: 3px solid transparent; border-top: 5px solid #888; border-bottom: 0; margin: 2px; flex: none; }
.tri.u { border-top: 0; border-bottom: 5px solid #888; }
.tri.l { border: 3px solid transparent; border-right: 4px solid #999; border-left: 0; margin: 0 2px; }
.tri.rr { border: 3px solid transparent; border-left: 4px solid #999; border-right: 0; margin: 0 2px; }
.hs { flex: 1; display: flex; align-items: center; padding-bottom: 1px; }
.hbar { width: 248px; height: 10px; background: #f75c5c; border: 1px solid #444; border-radius: 5px; }

.canvas { width: 697px; margin: 0 4px; border: 1px solid #777; border-top: 0; background: #fff; outline: 1px dotted #aaa; outline-offset: 1px; }
.map { width: 695px; height: 522px; }
.right { flex: 1; border-left: 1px solid #555; border-bottom: 1px solid #555; }
.tabs { height: 16px; flex: none; border-bottom: 1px solid #444; display: flex; }
.tabs span { width: 50px; background: #f75c5c; font: 8.300px/16px "DejaVu Sans", sans-serif; letter-spacing: -.35px; text-align: center; color: #4a1719; }
.cmds { margin: 8px 8px 7px 7px; flex: 1; border: 1px solid #777; border-radius: 3px; background: #fafefe; }
.c { height: 14.860px; display: flex; align-items: center; line-height: 14px; padding-left: 3px; white-space: nowrap; letter-spacing: -.25px; }
.c svg { width: 11px; height: 11px; margin-right: 4px; }
.c .ar { margin-right: 6.500px; }
.c.sub { padding-left: 36px; margin: 0 3px 0 1px; }
.c.sel { background: #77849b; color: #111; }
.c span { font-size: 10.300px; }

.status { height: 21px; flex: none; display: flex; align-items: center; background: #fbfbfb; padding-left: 2px; }
.locate { width: 219px; height: 17px; border: 1px solid #666; border-radius: 3px; background: #fff; display: flex; align-items: center; padding-left: 6px; gap: 5px; color: #777; font: 8.300px "DejaVu Sans", sans-serif; letter-spacing: -.1px; }
.locate svg { width: 10px; height: 10px; }
.lab { font: 8.500px "DejaVu Sans", sans-serif; letter-spacing: -.4px; width: 42px; margin: 0 2px 0 453px; white-space: nowrap; flex: none; }
.f71 { width: 71px; justify-content: center; }
.s14 { width: 13px; height: 13px; margin-left: 3px; }
.schaal { width: 27px; margin: 0 1px 0 9px; }
.f56 { width: 56px; }
.lock { margin-left: 7px; }
.verg { width: 50px; margin: 0 1px 0 5px; }
.f62 { width: 63px; }
.rot { width: 28px; margin: 0 5px 0 6px; }
.f60 { width: 61px; }
.xbox { width: 8px; height: 8px; margin-left: 4px; border: 1px solid #222; font: 8px/6px "DejaVu Sans", sans-serif; display: flex; justify-content: center; }
.her { width: 42px; margin: 0 0 0 5px; }
.globe { margin-left: 8px; }
.epsg { width: 50px; margin: 0 0 0 2px; }
.talk { margin-left: 11px; width: 14px; }

.taskbar { height: 34px; flex: none; display: flex; background: linear-gradient(90deg, #474747 0 990px, #2d3d47 1050px); color: #fff; }
.start { width: 41px; background: #2b3c46; display: flex; align-items: center; justify-content: center; }
.start svg { width: 14px; height: 14px; }
.search { width: 290px; background: #f1f1f1; border: 1px solid #c8c8c8; display: flex; align-items: center; padding-left: 9px; gap: 9px; font-size: 12.200px; letter-spacing: -.08px; color: #333; }
.search svg { width: 14px; height: 14px; }
.apps { display: flex; }
.app { width: 34px; margin: 0 4px; display: flex; align-items: center; justify-content: center; border-bottom: 2px solid #76b9ed; }
.app.two { border-image: linear-gradient(90deg, #76b9ed 27px, #4f81a8 27px) 2; border-bottom-width: 2px; border-top: 0; border-left: 0; border-right: 0; }
.app.none { border-color: transparent; margin-left: 3px; margin-right: 5px; }
.app.act { width: 41px; margin: 0; background: #6c6c6c; }
.app svg { width: 19px; height: 19px; }
.app svg.tv { width: 15px; height: 13px; }
.app svg.big3 { width: 21px; height: 18px; }
.tray { margin-left: auto; display: flex; align-items: center; font-size: 10.200px; }
.tray > svg { width: 74px; height: 14px; margin-right: 8px; }
.clock { display: flex; flex-direction: column; align-items: center; width: 50px; margin-left: 9px; line-height: 15.500px; font-size: 9.800px; }
.tray .note { width: 14px; height: 14px; margin: 0 0 0 13px; }
.edge { width: 1px; height: 34px; background: #7b868c; margin: 0 3px 0 17px; }

.dialog { position: absolute; left: 480px; top: 266px; width: 338px; height: 139px; background: #fafafa; box-shadow: 0 3px 10px rgba(0,0,0,.45), 0 0 1px #333; }
.dlgt { height: 25px; background: #fff; display: flex; align-items: center; padding: 0 10px 0 6px; font-size: 10px; letter-spacing: -.27px; }
.dl { width: 14px; height: 13px; margin-right: 3px; }
.x { width: 9px; height: 9px; margin-left: auto; }
.dlgb { display: flex; padding: 9px 0 0 9px; }
.info { width: 26px; height: 26px; }
.dlgb p { margin: 1px 0 0 15px; font-size: 10px; line-height: 13.500px; white-space: pre; }
.q1 { letter-spacing: -.19px; } .q2 { letter-spacing: -.26px; } .q3 { letter-spacing: -.25px; } .q4 { letter-spacing: -.24px; }
.ok { position: absolute; right: 9px; bottom: 9px; width: 19px; height: 19px; padding: 0; border: 1px solid #4a6a82; border-radius: 3px; background: #fff; font: 8.200px "DejaVu Sans", sans-serif; letter-spacing: -.3px; color: #111; }

.lines { position: absolute; inset: 0; width: 1298px; height: 730px; }
.mark { position: absolute; border: 4px solid #f00; }
.m-a { left: 101px; top: 116px; width: 33px; height: 25px; border-width: 3.500px; }
.m-b { left: 1004px; top: 199px; width: 266px; height: 19px; }
.num { position: absolute; width: 44px; height: 49px; border: 4px solid #f00; background: #fff; font: 21px/42px "Open Sans", sans-serif; color: #111; text-align: center; }
.n1 { left: 167px; top: 160px; padding-left: 5px; line-height: 38px; }
.n2 { left: 924px; top: 209px; padding-left: 4px; line-height: 44px; }
```
